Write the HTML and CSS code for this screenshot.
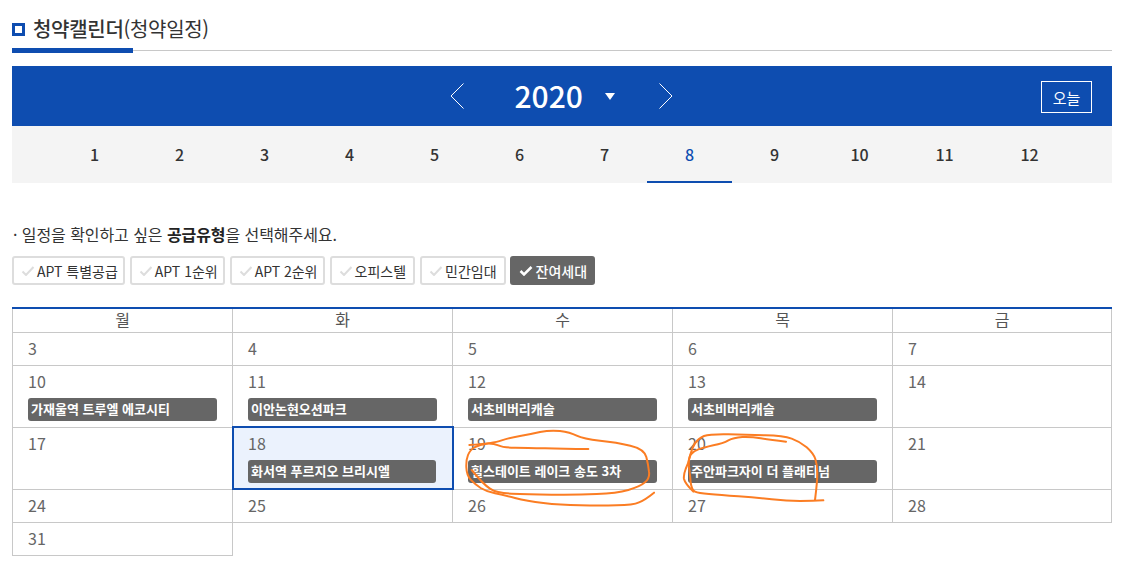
FILE: index.html
```html
<!DOCTYPE html>
<html lang="ko">
<head>
<meta charset="utf-8">
<title>청약캘린더</title>
<link rel="stylesheet" href="styles.css">
</head>
<body>
<main class="page">
  <h2 class="title"><span class="title-mark"></span><span class="title-text">청약캘린더<span class="title-sub">(청약일정)</span></span></h2>

  <section class="year-bar">
    <div class="year-nav">
      <svg class="chev" width="16" height="28" viewBox="0 0 16 28"><path d="M14.500 1.500 2 14l12.500 12.500" fill="none" stroke="#fff" stroke-width="1"/></svg>
      <span class="year">2020</span>
      <span class="caret"></span>
      <svg class="chev chev-next" width="16" height="28" viewBox="0 0 16 28"><path d="M1.500 1.500 14 14 1.500 26.500" fill="none" stroke="#fff" stroke-width="1"/></svg>
    </div>
    <button class="today">오늘</button>
  </section>

  <nav class="months">
    <a>1</a><a>2</a><a>3</a><a>4</a><a>5</a><a>6</a><a>7</a><a class="on">8</a><a>9</a><a>10</a><a>11</a><a>12</a>
  </nav>

  <p class="notice">· 일정을 확인하고 싶은 <b>공급유형</b>을 선택해주세요.</p>

  <div class="filters">
    <span class="chip"><svg class="tick" width="14" height="10" viewBox="0 0 14 10"><path d="M1.500 5.500 5 9l7.500-8" fill="none" stroke-width="2"/></svg>APT 특별공급</span>
    <span class="chip"><svg class="tick" width="14" height="10" viewBox="0 0 14 10"><path d="M1.500 5.500 5 9l7.500-8" fill="none" stroke-width="2"/></svg>APT 1순위</span>
    <span class="chip"><svg class="tick" width="14" height="10" viewBox="0 0 14 10"><path d="M1.500 5.500 5 9l7.500-8" fill="none" stroke-width="2"/></svg>APT 2순위</span>
    <span class="chip chip-ko"><svg class="tick" width="14" height="10" viewBox="0 0 14 10"><path d="M1.500 5.500 5 9l7.500-8" fill="none" stroke-width="2"/></svg>오피스텔</span>
    <span class="chip chip-ko"><svg class="tick" width="14" height="10" viewBox="0 0 14 10"><path d="M1.500 5.500 5 9l7.500-8" fill="none" stroke-width="2"/></svg>민간임대</span>
    <span class="chip chip-ko chip-on"><svg class="tick" width="14" height="10" viewBox="0 0 14 10"><path d="M1.500 5 5 8.500l7.500-7.500" fill="none" stroke-width="2.500"/></svg>잔여세대</span>
  </div>

  <table class="cal">
    <thead>
      <tr><th>월</th><th>화</th><th>수</th><th>목</th><th>금</th></tr>
    </thead>
    <tbody>
      <tr class="short"><td>3</td><td>4</td><td>5</td><td>6</td><td>7</td></tr>
      <tr>
        <td>10<div class="ev">가재울역 트루엘 에코시티</div></td>
        <td>11<div class="ev">이안논현오션파크</div></td>
        <td>12<div class="ev">서초비버리캐슬</div></td>
        <td>13<div class="ev">서초비버리캐슬</div></td>
        <td>14</td>
      </tr>
      <tr>
        <td>17</td>
        <td class="sel">18<div class="ev">화서역 푸르지오 브리시엘</div></td>
        <td>19<div class="ev">힐스테이트 레이크 송도 3차</div></td>
        <td>20<div class="ev">주안파크자이 더 플래티넘</div></td>
        <td>21</td>
      </tr>
      <tr class="short"><td>24</td><td>25</td><td>26</td><td>27</td><td>28</td></tr>
      <tr class="short"><td>31</td><td class="blank" colspan="4"></td></tr>
    </tbody>
  </table>
</main>

<svg class="scribble" width="370" height="90" viewBox="0 0 1110 270">
  <path d="M385 72Q310 72 255 70Q200 68 165 68Q130 68 115 61Q100 55 80 56Q60 58 45 66Q30 75 24 90Q18 105 19 127Q20 150 32 164Q45 178 62 189Q80 200 105 205Q130 210 165 219Q200 228 250 234Q300 240 360 241Q420 242 470 241Q520 240 537 232Q555 225 582 203"/>
  <path d="M28 60Q100 55 125 46Q150 38 180 33Q210 28 240 21Q270 15 300 18Q330 22 350 32Q370 42 420 47Q470 52 511 62Q553 72 559 96Q565 120 567 140Q570 160 555 172Q540 185 505 195Q470 205 410 207Q350 210 275 209Q200 208 155 206Q110 205 90 191Q70 178 35 135"/>
  <g transform="translate(660 0)">
    <path d="M318 50Q270 45 242 40Q215 35 187 36Q160 38 145 46Q130 55 100 61Q70 68 55 73Q40 78 32 89Q25 100 27 125Q30 150 32 172Q35 195 45 200Q55 205 87 207Q120 210 175 214Q230 218 275 223Q320 228 360 228Q400 228 430 226"/>
    <path d="M405 225Q412 170 412 145Q412 120 406 102Q400 85 380 67Q360 50 335 41Q310 32 255 31Q200 30 145 28Q90 27 72 33Q55 40 45 55Q35 70 30 92Q25 115 17 132Q10 150 12 162Q15 175 40 200"/>
  </g>
</svg>
</body>
</html>
```

FILE: styles.css
```css
* { box-sizing: border-box; }

html, body { margin: 0; padding: 0; background: #fff; }

body {
  font-family: "Noto Sans CJK KR", "Noto Sans", sans-serif;
  color: #333;
  overflow: hidden;
}

.page { padding: 0 18px 0 12px; position: relative; width: 1130px; }

.title {
  display: flex;
  align-items: center;
  height: 51px;
  margin: 0;
  padding-top: 8px;
  border-bottom: 1px solid #c8c8c8;
  position: relative;
  font-size: 20px;
  font-weight: 500;
  line-height: 26px;
  letter-spacing: -0.3px;
}

.title::after {
  content: "";
  position: absolute;
  left: 0;
  bottom: -3px;
  width: 121px;
  height: 5px;
  background: #0e4db0;
}

.title-mark {
  width: 13px;
  height: 13px;
  margin-right: 8px;
  border: 3px solid #0e4db0;
  background: #fff;
}

.title-sub { font-weight: 400; }

.year-bar {
  position: relative;
  display: flex;
  justify-content: center;
  align-items: center;
  height: 60px;
  margin-top: 15px;
  background: #0e4db0;
}

.year-nav {
  display: flex;
  align-items: center;
  position: relative;
  left: -1px;
}

.year {
  width: 68px;
  margin: -3px 0 0 50px;
  color: #fff;
  font-size: 30px;
  font-weight: 500;
  line-height: 40px;
  text-align: center;
}

.caret {
  width: 0;
  height: 0;
  margin-left: 22px;
  border-left: 5.500px solid transparent;
  border-right: 5.500px solid transparent;
  border-top: 7px solid #fff;
}

.chev-next { margin-left: 43px; }

.today {
  position: absolute;
  right: 20px;
  top: 15px;
  width: 51px;
  height: 32px;
  padding: 0;
  border: 1px solid #fff;
  background: transparent;
  color: #fff;
  font-family: inherit;
  font-size: 15px;
}

.months {
  display: flex;
  justify-content: center;
  height: 57px;
  background: #f4f4f4;
}

.months a {
  width: 85px;
  height: 57px;
  line-height: 57px;
  text-align: center;
  font-size: 16px;
  font-weight: 500;
  color: #333;
}

.months a.on {
  color: #0e4db0;
  border-bottom: 2px solid #0e4db0;
}

.notice {
  margin: 40px 0 0;
  padding-left: 1px;
  font-size: 16px;
  line-height: 22px;
  letter-spacing: -0.07px;
  color: #333;
}

.notice b { font-weight: 700; color: #222; }

.filters {
  display: flex;
  gap: 5px;
  margin-top: 11px;
}

.chip {
  display: flex;
  align-items: center;
  height: 29px;
  padding: 0 5px 0 7px;
  border: 2px solid #ddd;
  border-radius: 3px;
  background: #fff;
  color: #333;
  font-size: 14px;
  white-space: nowrap;
}

.chip-ko { padding-right: 7px; }

.tick { margin-right: 2px; stroke: #ddd; }

.chip-on {
  margin-left: -1px;
  padding-right: 6px;
  border-color: #666;
  background: #666;
  color: #fff;
  font-weight: 500;
}

.chip-on .tick { margin-right: 3px; stroke: #fff; }

.cal {
  width: 1100px;
  margin-top: 22px;
  border-collapse: collapse;
  table-layout: fixed;
  border-top: 2px solid #0e4db0;
}

.cal th {
  width: 220px;
  height: 24px;
  padding: 0 0 2px;
  border: 1px solid #c8c8c8;
  border-top: 0;
  font-size: 16px;
  font-weight: 400;
  color: #555;
  line-height: 20px;
}

.cal th:last-child { width: auto; }

.cal td {
  height: 62px;
  padding: 2px 15px 6px;
  border: 1px solid #c8c8c8;
  font-size: 16px;
  line-height: 26px;
  color: #666;
  vertical-align: top;
}

.cal .short td { height: 33px; padding-top: 2px; padding-bottom: 3px; }

.cal td.blank { border: 0; border-top: 1px solid #c8c8c8; }

.cal td.sel {
  background: #ebf2fd;
  outline: 2px solid #0e4db0;
  outline-offset: -1px;
}

.ev {
  height: 23px;
  margin-top: 4px;
  padding: 0 3px;
  border-radius: 3px;
  background: #666;
  color: #fff;
  font-size: 13px;
  font-weight: 700;
  line-height: 21px;
  white-space: nowrap;
  overflow: hidden;
}

.sel .ev { margin-right: 1px; }

.scribble {
  position: absolute;
  left: 460px;
  top: 425px;
  overflow: visible;
  fill: none;
  stroke: #fb7d23;
  stroke-width: 6;
  stroke-linejoin: round;
  stroke-linecap: round;
}
```
